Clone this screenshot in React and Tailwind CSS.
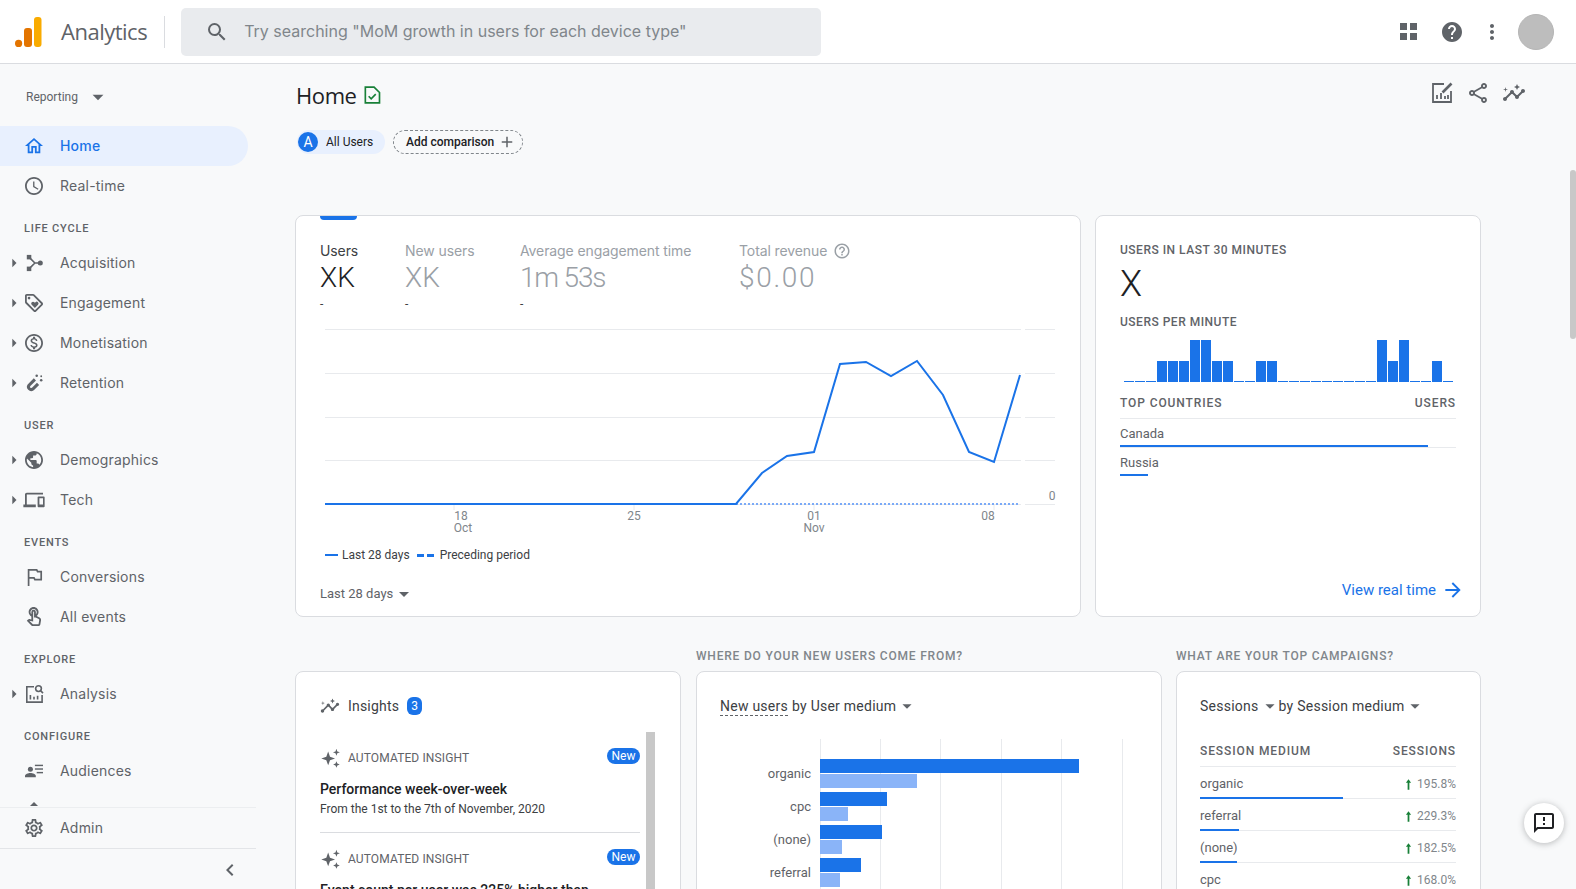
import {
  MdAdd,
  MdArrowDropDown,
  MdArrowForward,
  MdArrowRight,
  MdChevronLeft,
  MdHelp,
  MdMoreVert,
  MdOutlineAccessTime,
  MdOutlineDevices,
  MdOutlineFeedback,
  MdOutlineHelpOutline,
  MdOutlineHome,
  MdOutlineInsights,
  MdOutlineLoyalty,
  MdOutlineMonetizationOn,
  MdOutlineSettings,
  MdOutlineShare,
  MdOutlineTouchApp,
  MdPublic,
  MdSearch,
} from "react-icons/md";

const AcquisitionIcon = ({ className }) => (
  <svg viewBox="0 0 24 24" className={className} fill="currentColor">
    <rect x="4" y="3" width="5" height="5" />
    <rect x="4" y="16" width="5" height="5" />
    <circle cx="19" cy="12" r="2.8" />
    <path d="M7 6l6 6h5M7 18l6-6" fill="none" stroke="currentColor" strokeWidth="1.8" />
  </svg>
);

const MagnetIcon = ({ className }) => (
  <svg viewBox="0 0 24 24" className={className} fill="currentColor">
    <path d="M13 8l-6.5 6.5a3 3 0 0 0 4.2 4.2L16.5 13" fill="none" stroke="currentColor" strokeWidth="3.4" />
    <circle cx="15" cy="4" r="1.4" />
    <circle cx="20" cy="9" r="1.4" />
    <circle cx="20" cy="4.5" r="1" />
  </svg>
);

const FlagIcon = ({ className }) => (
  <svg viewBox="0 0 24 24" className={className} fill="none" stroke="currentColor" strokeWidth="1.9">
    <path d="M6 22V4h9l1 2h4v9h-7l-1-2H6" />
  </svg>
);

const AnalysisIcon = ({ className }) => (
  <svg viewBox="0 0 24 24" className={className} fill="none" stroke="currentColor" strokeWidth="1.8">
    <path d="M12 4H4v17h17v-8" />
    <path d="M8 18v-5M12 18v-3M16 18v-4" />
    <circle cx="17" cy="6" r="3.2" />
    <path d="M19.5 8.5L22 11" />
  </svg>
);

const AudiencesIcon = ({ className }) => (
  <svg viewBox="0 0 24 24" className={className} fill="currentColor">
    <circle cx="8" cy="10" r="2.8" />
    <path d="M2 19v-1.5c0-2 3.5-3.2 6-3.2s6 1.2 6 3.2V19z" />
    <rect x="13" y="5" width="9" height="1.6" />
    <rect x="13" y="9" width="9" height="1.6" />
    <rect x="15" y="13" width="7" height="1.6" />
  </svg>
);

const ReportEditIcon = ({ className }) => (
  <svg viewBox="0 0 24 24" className={className} fill="none" stroke="currentColor" strokeWidth="1.8">
    <path d="M14 3H3v18h18V10" />
    <path d="M7 18v-4M11 18v-6M15 18v-3M18 18v-4" />
    <path d="M12.5 11.5l9-9" strokeWidth="2.6" />
  </svg>
);

const FileCheckIcon = ({ className }) => (
  <svg viewBox="0 0 24 24" className={className} fill="none" stroke="currentColor" strokeWidth="2">
    <path d="M4 2.5h10.5L21 9v12.5H4z" />
    <path d="M8 13.5l3 3 5.5-5.5" />
  </svg>
);

const SparkleIcon = ({ className }) => (
  <svg viewBox="0 0 24 24" className={className} fill="currentColor">
    <path d="M10 5l2 5.5 5.5 2-5.5 2-2 5.5-2-5.5-5.5-2 5.5-2z" />
    <path d="M19 2l1 2.8 2.8 1-2.8 1-1 2.8-1-2.8-2.8-1 2.8-1z" />
    <path d="M19 15.5l1 2.6 2.6 1-2.6 1-1 2.6-1-2.6-2.6-1 2.6-1z" />
  </svg>
);

const UpArrow = () => (
  <svg viewBox="0 0 8 12" className="mr-[5px] h-[11px] w-[7px] text-[#188038]" fill="currentColor">
    <path d="M4 0l3 4H5v8H3V4H1z" />
  </svg>
);

const navGroups = [
  {
    items: [
      { label: "Home", icon: MdOutlineHome, active: true },
      { label: "Real-time", icon: MdOutlineAccessTime },
    ],
  },
  {
    title: "LIFE CYCLE",
    items: [
      { label: "Acquisition", icon: AcquisitionIcon, caret: true },
      { label: "Engagement", icon: MdOutlineLoyalty, caret: true },
      { label: "Monetisation", icon: MdOutlineMonetizationOn, caret: true },
      { label: "Retention", icon: MagnetIcon, caret: true },
    ],
  },
  {
    title: "USER",
    items: [
      { label: "Demographics", icon: MdPublic, caret: true },
      { label: "Tech", icon: MdOutlineDevices, caret: true },
    ],
  },
  {
    title: "EVENTS",
    items: [
      { label: "Conversions", icon: FlagIcon },
      { label: "All events", icon: MdOutlineTouchApp },
    ],
  },
  { title: "EXPLORE", items: [{ label: "Analysis", icon: AnalysisIcon, caret: true }] },
  { title: "CONFIGURE", items: [{ label: "Audiences", icon: AudiencesIcon }] },
];

const NavItem = ({ item }) => {
  const Icon = item.icon;
  return (
    <div
      className={`relative flex h-10 items-center rounded-r-full font-[Inter,sans-serif] text-sm tracking-[0.2px] ${
        item.active ? "w-[248px] bg-[#e8f0fe] font-medium text-[#1a73e8]" : "text-[#5f6368]"
      }`}
    >
      {item.caret && <MdArrowRight className="absolute left-[4px] size-[20px]" />}
      <Icon className="ml-[22px] size-[24px] scale-[0.9]" />
      <span className="ml-[14px]">{item.label}</span>
    </div>
  );
};

const Sidebar = () => (
  <aside className="flex h-full w-[256px] shrink-0 flex-col">
    <div className="flex h-[66px] shrink-0 items-center pl-[26px] text-xs text-[#5f6368]">
      Reporting
      <MdArrowDropDown className="ml-[7px] size-[26px]" />
    </div>
    <nav className="-mt-[4px] min-h-0 flex-1 overflow-hidden">
      {navGroups.map((group, i) => (
        <div key={i}>
          {group.title && (
            <div className="pb-[6px] pl-[24px] pt-[15px] text-[11px] font-medium leading-4 tracking-[0.8px] text-[#5f6368]">
              {group.title}
            </div>
          )}
          {group.items.map((item) => (
            <NavItem key={item.label} item={item} />
          ))}
        </div>
      ))}
      <svg viewBox="0 0 8 4" className="ml-[30px] mt-[11px] h-[4px] w-[8px] text-[#5f6368]" fill="currentColor">
        <path d="M4 0l4 4H0z" />
      </svg>
    </nav>
    <div className="shrink-0 border-b border-t border-b-[#e3e5e8] border-t-[#eceef0]">
      <NavItem item={{ label: "Admin", icon: MdOutlineSettings }} />
    </div>
    <div className="flex h-[40px] shrink-0 items-center justify-end pr-[14px] text-[#5f6368]">
      <MdChevronLeft className="mt-[2px] size-[24px]" />
    </div>
  </aside>
);

const Header = () => (
  <header className="flex h-[64px] shrink-0 items-center border-b border-[#dadce0] bg-white">
    <svg viewBox="0 0 27 30" className="ml-[15px] h-[30px] w-[27px]">
      <circle cx="3.6" cy="26.4" r="3.6" fill="#e37400" />
      <rect x="9" y="11" width="8" height="19" rx="3" fill="#e37400" />
      <rect x="19" y="0" width="7.5" height="30" rx="3" fill="#f9ab00" />
    </svg>
    <span className="ml-[19px] font-['Open_Sans',sans-serif] text-[22px] tracking-[-0.5px] text-[#5f6368]">Analytics</span>
    <div className="ml-[17px] h-[32px] w-px bg-[#dadce0]" />
    <div className="ml-[16px] flex h-[48px] w-[640px] items-center rounded-[5px] bg-[#e9ebee] font-[Inter,sans-serif] text-base text-[#80868b]">
      <MdSearch className="ml-[24px] size-[24px] text-[#5f6368]" />
      <span className="ml-[15px] pb-[2px]">Try searching "MoM growth in users for each device type"</span>
    </div>
    <div className="ml-auto flex items-center text-[#5f6368]">
      <div className="grid grid-cols-2 gap-[3px]">
        <div className="size-[7px] bg-[#5f6368]" />
        <div className="size-[7px] bg-[#5f6368]" />
        <div className="size-[7px] bg-[#5f6368]" />
        <div className="size-[7px] bg-[#5f6368]" />
      </div>
      <MdHelp className="ml-[23px] size-[24px]" />
      <MdMoreVert className="ml-[16px] size-[24px]" />
      <div className="ml-[14px] mr-[22px] size-[36px] rounded-full border border-[#b5b5b5] bg-[#bdbdbd]" />
    </div>
  </header>
);

const metrics = [
  { label: "Users", value: "XK", width: "w-[85px]", on: true },
  { label: "New users", value: "XK", width: "w-[115px]" },
  { label: "Average engagement time", value: "1m 53s", width: "w-[219px]", track: "tracking-[-1.2px]" },
  { label: "Total revenue", value: "$0.00", help: true, noDelta: true, track: "tracking-[1.7px]" },
];

const linePoints =
  "325,504 736,504 762,473 787,456 814,452 840,364 866,362 891,376 917,361 943,395 969,452 994,462 1020,375";

const Overview = () => (
  <section className="relative h-[402px] w-[786px] shrink-0 rounded-lg border border-[#dadce0] bg-white px-6">
    <div className="absolute left-[24px] top-0 h-[4px] w-[37px] rounded-b-[4px] bg-[#1a73e8]" />
    <div className="flex h-[109px] pt-[24px]">
      {metrics.map((m) => (
        <div key={m.label} className={m.width}>
          <div className={`flex items-center gap-[6px] pt-[1px] font-[Inter,sans-serif] text-sm leading-[19px] tracking-[-0.1px] ${m.on ? "text-[#3c4043]" : "text-[#9aa0a6]"}`}>
            {m.label}
            {m.help && <MdOutlineHelpOutline className="size-[18px]" />}
          </div>
          <div className={`text-[28px] font-light leading-[36px] ${m.track || ""} ${m.on ? "text-[#202124]" : "text-[#9aa0a6]"}`}>{m.value}</div>
          {!m.noDelta && <div className="text-xs leading-[16px] text-[#3c4043]">-</div>}
        </div>
      ))}
    </div>
    <svg viewBox="320 325 736 210" className="block h-[210px] w-[736px]">
      {[329.5, 373.5, 417.5, 460.5, 504.5].map((y) => (
        <g key={y} stroke="#e8eaed">
          <line x1="325" x2="1021" y1={y} y2={y} />
          <line x1="1025" x2="1055" y1={y} y2={y} />
        </g>
      ))}
      {[454, 634, 814, 994].map((x) => (
        <line key={x} x1={x} x2={x} y1="505" y2="510" stroke="#e8eaed" />
      ))}
      <line x1="736" x2="1020" y1="504" y2="504" stroke="#7baaf7" strokeWidth="2" strokeDasharray="2 2" />
      <polyline points={linePoints} fill="none" stroke="#1a73e8" strokeWidth="2" />
      <g fill="#80868b" fontSize="12" textAnchor="middle">
        <text x="461" y="520">18</text>
        <text x="463" y="532">Oct</text>
        <text x="634" y="520">25</text>
        <text x="814" y="520">01</text>
        <text x="814" y="532">Nov</text>
        <text x="988" y="520">08</text>
        <text x="1052" y="500">0</text>
      </g>
    </svg>
    <div className="ml-[5px] mt-[11px] flex h-[18px] items-center text-xs text-[#3c4043]">
      <div className="h-[2px] w-[13px] bg-[#1a73e8]" />
      <span className="ml-[4px]">Last 28 days</span>
      <div className="ml-[7px] h-[3px] w-[7px] bg-[#1a73e8]" />
      <div className="ml-[3px] h-[3px] w-[7px] bg-[#1a73e8]" />
      <span className="ml-[6px]">Preceding period</span>
    </div>
    <div className="mt-[21px] flex h-[18px] items-center text-[13px] leading-[18px] text-[#5f6368]">
      Last 28 days
      <MdArrowDropDown className="-ml-[1px] size-[24px]" />
    </div>
  </section>
);

const perMinute = [0, 0, 0, 1, 1, 1, 2, 2, 1, 1, 0, 0, 1, 1, 0, 0, 0, 0, 0, 0, 0, 0, 0, 2, 1, 2, 0, 0, 1, 0];

const barHeights = ["h-[1px]", "h-[21px]", "h-[42px]"];

const countries = [
  { name: "Canada", bar: "w-[308px]" },
  { name: "Russia", bar: "w-[28px]" },
];

const Realtime = () => (
  <section className="relative h-[402px] w-[386px] shrink-0 rounded-lg border border-[#dadce0] bg-white px-6 pt-[26px] font-medium">
    <div className="text-xs leading-4 tracking-[0.5px] text-[#5f6368]">USERS IN LAST 30 MINUTES</div>
    <div className="mt-[4px] text-[36px] font-light leading-[44px] text-[#202124]">X</div>
    <div className="mt-[8px] text-xs leading-4 tracking-[0.5px] text-[#5f6368]">USERS PER MINUTE</div>
    <div className="ml-[4px] mt-[10px] flex h-[42px] items-end gap-px">
      {perMinute.map((v, i) => (
        <div key={i} className={`w-[10px] bg-[#1a73e8] ${barHeights[v]}`} />
      ))}
    </div>
    <div className="mt-[13px] flex justify-between border-b border-[#e8eaed] pb-[7px] text-xs leading-4 tracking-[0.9px] text-[#5f6368]">
      <span>TOP COUNTRIES</span>
      <span>USERS</span>
    </div>
    <div className="w-[336px]">
      {countries.map((c) => (
        <div key={c.name} className="h-[29px] border-b border-[#e8eaed] pt-[6px] text-[13px] font-normal leading-[18px] text-[#5f6368] last:border-b-0">
          {c.name}
          <div className={`mt-[1.5px] h-[2px] bg-[#1a73e8] ${c.bar}`} />
        </div>
      ))}
    </div>
    <div className="absolute bottom-[15px] right-[17px] flex items-center text-[15px] font-normal text-[#1a73e8]">
      View real time
      <MdArrowForward className="ml-[7px] size-[20px] scale-[1.15]" />
    </div>
  </section>
);

const InsightRow = ({ title, sub }) => (
  <div>
    <div className="flex h-[24px] items-center">
      <SparkleIcon className="-ml-[1px] size-[22px] text-[#5f6368]" />
      <span className="ml-[7px] text-xs tracking-[0.12px] text-[#5f6368]">AUTOMATED INSIGHT</span>
      <span className="-mt-[4px] ml-auto rounded-full bg-[#1a73e8] px-[4.5px] text-xs leading-[16px] text-white">New</span>
    </div>
    <div className="mt-[9px] text-sm font-medium leading-5 text-[#202124]">{title}</div>
    {sub && <div className="text-xs leading-5 text-[#3c4043]">{sub}</div>}
  </div>
);

const Insights = () => (
  <section className="h-[300px] w-[386px] shrink-0 overflow-hidden rounded-lg border border-[#dadce0] bg-white px-6">
    <div className="flex h-[60px] items-center pt-[8px]">
      <MdOutlineInsights className="size-[20px] text-[#5f6368]" />
      <span className="ml-[8px] text-sm tracking-[0.2px] text-[#3c4043]">Insights</span>
      <span className="ml-[8px] flex h-[18px] w-[15px] items-center justify-center rounded-[6px] bg-[#1a73e8] text-xs text-white">3</span>
    </div>
    <div className="flex h-full gap-[6px]">
      <div className="w-[320px] pt-[14px]">
        <InsightRow title="Performance week-over-week" sub="From the 1st to the 7th of November, 2020" />
        <div className="mb-[14px] mt-[13px] border-t border-[#dadce0]" />
        <InsightRow title="Event count per user was 225% higher than" />
      </div>
      <div className="w-[9px] bg-[#c8c8c8]" />
    </div>
  </section>
);

const mediumBars = [
  { label: "organic", y: 759, cur: 1079, prev: 917 },
  { label: "cpc", y: 792, cur: 887, prev: 848 },
  { label: "(none)", y: 825, cur: 882, prev: 842 },
  { label: "referral", y: 858, cur: 861, prev: 840 },
];

const NewUsers = () => (
  <section className="h-[300px] w-[466px] shrink-0 overflow-hidden rounded-lg border border-[#dadce0] bg-white pl-[23px]">
    <div className="flex h-[60px] items-center pt-[8px] text-sm tracking-[0.25px] text-[#3c4043]">
      <span className="border-b border-dashed border-[#5f6368] leading-[18px]">New users</span>
      <span className="ml-[4px]">by User medium</span>
      <MdArrowDropDown className="size-[22px] text-[#5f6368]" />
    </div>
    <svg viewBox="720 732 400 160" className="block h-[160px] w-[400px]" overflow="visible">
      {[820, 880, 940, 1001, 1061, 1122].map((x) => (
        <line key={x} x1={x + 0.5} x2={x + 0.5} y1="739" y2="893" stroke="#e8eaed" />
      ))}
      {mediumBars.map((b) => (
        <g key={b.label}>
          <rect x="820" y={b.y} width={b.cur - 820} height="14" fill="#1a73e8" />
          <rect x="820" y={b.y + 15} width={b.prev - 820} height="14" fill="#8ab4f8" />
          <text x="811" y={b.y + 19} textAnchor="end" fontSize="13" fill="#5f6368">{b.label}</text>
        </g>
      ))}
    </svg>
  </section>
);

const campaigns = [
  { name: "organic", pct: "195.8%", bar: "w-[143px]" },
  { name: "referral", pct: "229.3%", bar: "w-[39px]" },
  { name: "(none)", pct: "182.5%", bar: "w-[37px]" },
  { name: "cpc", pct: "168.0%" },
];

const Campaigns = () => (
  <section className="-ml-[1px] h-[300px] w-[305px] shrink-0 overflow-hidden rounded-lg border border-[#dadce0] bg-white pl-[23px] pr-6">
    <div className="flex h-[60px] items-center pt-[8px] text-sm tracking-[0.25px] text-[#3c4043]">
      Sessions
      <MdArrowDropDown className="size-[22px] text-[#5f6368]" />
      <span className="-ml-[2px]">by Session medium</span>
      <MdArrowDropDown className="size-[22px] text-[#5f6368]" />
    </div>
    <div className="mt-[11px] flex justify-between border-b border-[#e8eaed] pb-[7px] text-xs font-medium leading-4 tracking-[0.9px] text-[#5f6368]">
      <span>SESSION MEDIUM</span>
      <span>SESSIONS</span>
    </div>
    {campaigns.map((c) => (
      <div key={c.name} className="relative h-[32px] border-b border-[#e8eaed] pt-[7px]">
        <div className="flex items-center justify-between leading-[20px]">
          <span className="text-[13px] text-[#5f6368]">{c.name}</span>
          <span className="flex items-center text-xs text-[#80868b]">
            <UpArrow />
            {c.pct}
          </span>
        </div>
        {c.bar && <div className={`absolute bottom-[-1px] left-0 h-[2px] bg-[#1a73e8] ${c.bar}`} />}
      </div>
    ))}
  </section>
);

const Main = () => (
  <main className="relative h-full min-w-0 flex-1 overflow-hidden pl-[39px]">
    <div className="flex items-start justify-between pr-[50px] pt-[16px]">
      <div className="flex items-center">
        <h1 className="ml-[1px] font-['Open_Sans',sans-serif] text-[22px] leading-[30px] tracking-[-0.4px] text-[#202124]">Home</h1>
        <FileCheckIcon className="ml-[5px] size-[20px] text-[#188038]" />
      </div>
      <div className="mt-[1px] flex items-center gap-[12px] text-[#5f6368]">
        <ReportEditIcon className="size-[24px]" />
        <MdOutlineShare className="size-[24px]" />
        <MdOutlineInsights className="size-[24px]" />
      </div>
    </div>
    <div className="mt-[20px] flex h-[24px] items-center text-xs text-[#202124]">
      <div className="ml-[2px] flex h-[24px] w-[88px] items-center rounded-full bg-[#e8f0fe]">
        <div className="ml-[1px] flex size-[20px] items-center justify-center rounded-full bg-[#1a73e8] text-sm text-white">A</div>
        <span className="ml-[8px]">All Users</span>
      </div>
      <div className="ml-[8px] flex h-[24px] w-[130px] items-center rounded-full border border-dashed border-[#80868b] pl-[12px]">
        <span className="font-medium">Add comparison</span>
        <MdAdd className="ml-[4px] size-[18px] text-[#5f6368]" />
      </div>
    </div>
    <div className="mt-[61px] flex gap-[14px]">
      <Overview />
      <Realtime />
    </div>
    <div className="mt-[31px] flex text-xs font-medium leading-4 tracking-[0.8px] text-[#80868b]">
      <span className="ml-[401px]">WHERE DO YOUR NEW USERS COME FROM?</span>
      <span className="absolute left-[920px]">WHAT ARE YOUR TOP CAMPAIGNS?</span>
    </div>
    <div className="mt-[7px] flex gap-[15px]">
      <Insights />
      <NewUsers />
      <Campaigns />
    </div>
    <div className="absolute right-0 top-[106px] h-[169px] w-[6px] rounded-full bg-[#c8c8c8]" />
    <div className="absolute left-[1268px] top-[739px] flex size-[40px] items-center justify-center rounded-full bg-white text-[#202124] shadow-[0_1px_6px_rgba(60,64,67,0.35)]">
      <MdOutlineFeedback className="size-[24px]" />
    </div>
  </main>
);

export default function App() {
  return (
    <div className="flex h-[889px] w-[1576px] flex-col overflow-hidden bg-[#f8f9fa] font-[Roboto,sans-serif]">
      <Header />
      <div className="flex min-h-0 flex-1">
        <Sidebar />
        <Main />
      </div>
    </div>
  );
}
